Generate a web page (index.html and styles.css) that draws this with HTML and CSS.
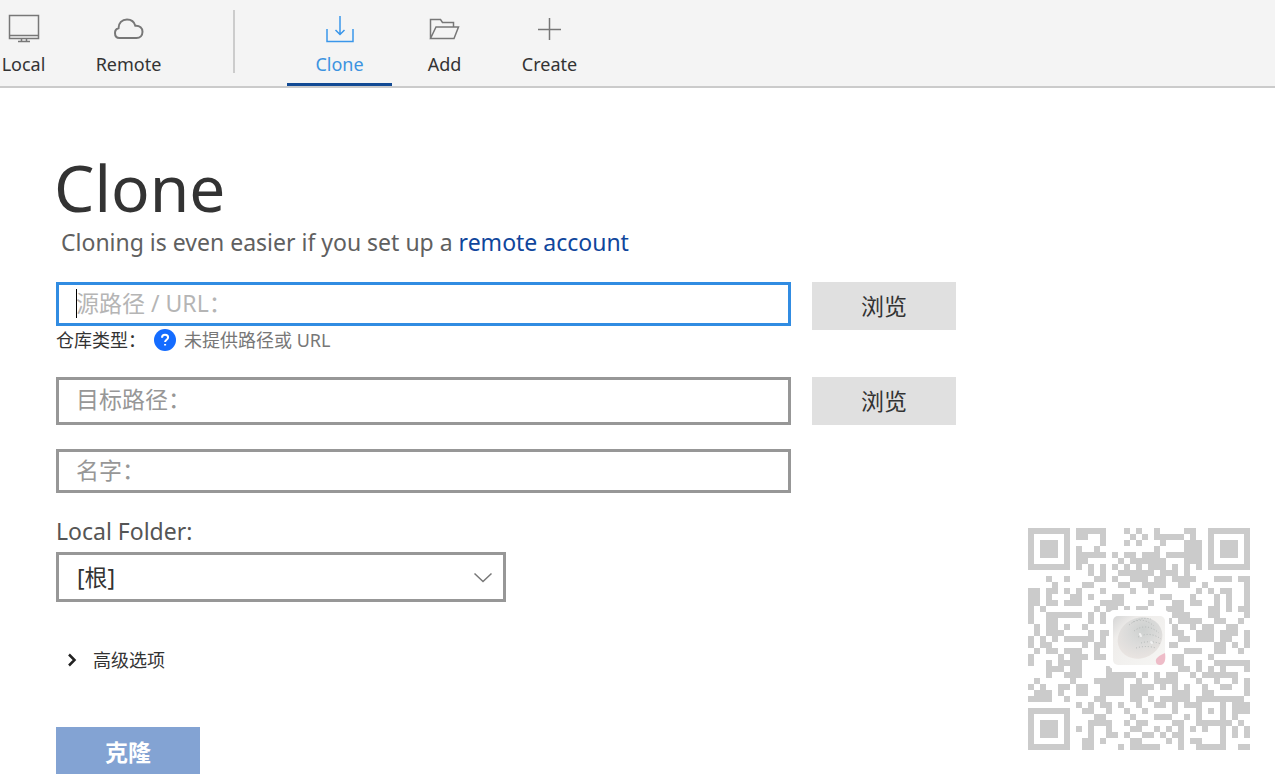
FILE: index.html
```html
<!DOCTYPE html>
<html lang="zh-CN">
<head>
<meta charset="utf-8">
<meta name="viewport" content="width=device-width, initial-scale=1">
<title>Clone</title>
<link rel="stylesheet" href="styles.css">
</head>
<body>
<header class="toolbar">
  <nav class="tabs">
    <button class="tab" type="button">
      <svg class="tab-icon" viewBox="0 0 32 32"><path d="M1.500 2.500h29v23h-29zM1.500 22.500h29M13.500 26v2.500M18.500 26v2.500M10 28.500h12"/></svg>
      <span>Local</span>
    </button>
    <button class="tab" type="button">
      <svg class="tab-icon cloud" viewBox="0 0 32 32"><path d="M6.500 25C3 25 2 22.500 2 20c0-2.500 1.300-4.300 3.500-4.800C5.500 10 9 6.500 14 6.500c4.300 0 7.300 2.500 8.300 6.300 4.500-.3 7.200 2.200 7.200 6 0 3.500-2.500 6.200-6 6.200z"/></svg>
      <span>Remote</span>
    </button>
    <span class="divider"></span>
    <button class="tab active" type="button" aria-current="page">
      <svg class="tab-icon" viewBox="0 0 32 32"><path d="M3 16v12.500h26V16M16 3v18.500M11.500 17l4.500 4.500 4.500-4.500"/></svg>
      <span>Clone</span>
    </button>
    <button class="tab" type="button">
      <svg class="tab-icon" viewBox="0 0 32 32"><path d="M1.500 25.500V6.500h10l2 3h11v4.500M1.500 25.500L7 14h22.500l-4.500 11.500z"/></svg>
      <span>Add</span>
    </button>
    <button class="tab" type="button">
      <svg class="tab-icon" viewBox="0 0 32 32"><path d="M15.500 5v22M4 16.500h23"/></svg>
      <span>Create</span>
    </button>
  </nav>
</header>

<main class="page">
  <h1 class="title">Clone</h1>
  <p class="subtitle">Cloning is even easier if you set up a <a href="#accounts">remote account</a></p>

  <form class="form">
    <div class="row">
      <div class="source">
        <div class="source-box">
          <input class="field focused" type="text" placeholder="源路径 / URL：" aria-label="源路径 / URL">
          <span class="caret"></span>
        </div>
        <div class="repo-type">
          <span>仓库类型：</span>
          <svg class="help" viewBox="0 0 22 22"><circle cx="11" cy="11" r="11"/><path d="M8 8.700C8 6.700 9.300 5.800 11 5.800s3.100 1 3.100 2.700c0 2.300-3 2.300-3 4.500M11.100 14.900v1.700"/></svg>
          <span class="status">未提供路径或 URL</span>
        </div>
      </div>
      <button class="browse" type="button">浏览</button>
    </div>
    <div class="row target">
      <input class="field tall" type="text" placeholder="目标路径：" aria-label="目标路径">
      <button class="browse" type="button">浏览</button>
    </div>
    <div class="row name">
      <input class="field" type="text" placeholder="名字：" aria-label="名字">
    </div>

    <label class="folder-label" for="folder">Local Folder:</label>
    <div class="select-box">
      <select class="select" id="folder"><option>[根]</option></select>
      <svg class="chevron" viewBox="0 0 20 12"><path d="M1.500 1.500L10 9.500l8.500-8"/></svg>
    </div>

    <button class="advanced" type="button" aria-expanded="false">
      <svg class="arrow" viewBox="0 0 12 14"><path d="M3 1.500L8.500 7 3 12.500"/></svg>
      <span>高级选项</span>
    </button>
    <button class="submit" type="submit">克隆</button>
  </form>
</main>

<aside class="qr">
  <svg class="qr-svg" viewBox="0 0 222 222" role="img" aria-label="QR">
    <defs>
      <linearGradient id="card" x1="0" y1="0" x2="1" y2="1"><stop offset="0" stop-color="#d6d6d6"/><stop offset=".25" stop-color="#efedeb"/><stop offset="1" stop-color="#f6f6f4"/></linearGradient>
      <radialGradient id="ball" cx=".65" cy=".35" r=".7"><stop offset="0" stop-color="#cdd0cf"/><stop offset=".5" stop-color="#dbdbda"/><stop offset="1" stop-color="#e9e4e1"/></radialGradient>
    </defs>
    <path id="modules" class="modules"/>
    <rect x="81" y="82" width="60" height="59" rx="5" fill="#fff"/>
    <rect x="85" y="88" width="52" height="49" rx="5" fill="url(#card)"/>
    <ellipse cx="112" cy="110" rx="23" ry="20" fill="url(#ball)" transform="rotate(-28 112 110)"/>
    <g fill="none" stroke="#b4b8b7" stroke-width="1" stroke-dasharray="1 2"><path d="M101 97q12-10 25 1M106 103q12-9 25 2M110 109q12-6 23 2M113 115q10-3 20 1M105 94q9-5 18-3M108 120q10-3 20 0"/></g>
    <path d="M112 106l1 2M123 114l1 1" stroke="#f2f2f2" stroke-width="2" stroke-linecap="round"/>
    <path d="M128 134c-1-4 3-6 9-9 1 6 0 12-5 12-2 0-4-1-4-3z" fill="#eebcc8"/>
  </svg>
</aside>
<script src="qr.js"></script>
</body>
</html>
```

FILE: styles.css
```css
* { box-sizing: border-box; }

body {
  margin: 0;
  min-height: 100vh;
  position: relative;
  background: #fff;
  color: #333;
  font-family: "Noto Sans", "Noto Sans CJK SC", sans-serif;
}

button, input, select { font: inherit; color: inherit; border-radius: 0; }
button { border: 0; padding: 0; background: none; cursor: pointer; }

.toolbar {
  height: 88px;
  background: #f4f4f4;
  border-bottom: 2px solid #cbcbcb;
  overflow: hidden;
}
.tabs { display: flex; height: 100%; margin-left: -29px; }
.tab {
  flex: none;
  width: 105px;
  display: flex;
  flex-direction: column;
  align-items: center;
  gap: 7px;
  padding-top: 13px;
  border-bottom: 3px solid transparent;
  font-size: 18px;
  line-height: 24px;
}
.tab-icon { width: 32px; height: 32px; fill: none; stroke: #777; stroke-width: 1.5; }
.cloud { stroke-width: 2; }
.active { color: #3c93e0; border-bottom-color: #124a94; }
.active .tab-icon { stroke: #3a96ea; }
.divider { flex: none; width: 2px; height: 63px; margin: 10px 52px 0; background: #ccc; }

.page { padding: 58px 24px 0 56px; }
.title { margin: 0 0 0 -2px; font-size: 64px; line-height: 84px; font-weight: 400; }
.subtitle { margin: 0; padding-left: 5px; font-size: 23px; line-height: 24px; color: #606060; }
.subtitle a { color: #10469c; text-decoration: none; }

.form { max-width: 900px; margin-top: 28px; }
.row {
  display: grid;
  grid-template-columns: minmax(0, 1fr) 144px;
  column-gap: 21px;
  align-items: start;
}
.target { margin-top: 24px; }
.name { margin-top: 24px; }
.field {
  display: block;
  width: 100%;
  height: 44px;
  padding: 0 17px 2px;
  border: 3px solid #979797;
  background: #fff;
  font-size: 23px;
  outline: none;
}
.field::placeholder { color: #979797; opacity: 1; }
.tall { height: 48px; padding-bottom: 5px; }
.focused { border-color: #318ce2; }
.focused::placeholder { color: #b5b5b5; }
.source-box { position: relative; }
.caret { position: absolute; left: 20px; top: 7px; width: 1px; height: 29px; background: #000; }
.repo-type {
  display: flex;
  align-items: center;
  height: 27px;
  font-size: 18px;
  line-height: 24px;
}
.help { width: 22px; height: 22px; margin: 0 8px; fill: #146cff; }
.help path { fill: none; stroke: #fff; stroke-width: 2; }
.status { color: #777; }
.browse { height: 48px; padding-bottom: 2px; background: #e0e0e0; font-size: 23px; }

.folder-label {
  display: block;
  margin-top: 23px;
  font-size: 23px;
  line-height: 30px;
  color: #555;
}
.select-box { position: relative; max-width: 450px; margin-top: 6px; }
.select {
  display: block;
  width: 100%;
  height: 50px;
  padding: 0 48px 0 18px;
  border: 3px solid #979797;
  background: #fff;
  font-size: 23px;
  appearance: none;
}
.chevron { position: absolute; right: 13px; top: 20px; width: 20px; height: 12px; fill: none; stroke: #777; stroke-width: 1.5; pointer-events: none; }

.advanced {
  display: flex;
  align-items: center;
  gap: 15px;
  margin-top: 46px;
  padding-left: 10px;
  font-size: 18px;
  line-height: 24px;
}
.arrow { width: 12px; height: 14px; fill: none; stroke: #222; stroke-width: 2.5; }
.submit {
  display: block;
  width: 144px;
  height: 47px;
  margin-top: 55px;
  background: #83a3d3;
  color: #fff;
  font-size: 23px;
  font-weight: 700;
}

.qr { position: absolute; right: 25px; bottom: 24px; width: 222px; height: 222px; }
.qr-svg { display: block; width: 100%; height: 100%; }
.modules { fill: #cbcbcb; shape-rendering: crispEdges; }
```

FILE: qr.js
```js
// Dark modules of each row, as column numbers and column ranges.
const rows = [
  "8-12 16 18 21 26-27",
  "8-9 12 17 19 21-25 27",
  "12 16 18 22 26-28",
  "8 11 21 26-28",
  "8-12 14 16-17 19-21 23-28",
  "8-9 15 17-22 26-28",
  "8 10 12 14 16 18 20-22 24 26 28",
  "10 12 15-20 22-24 26",
  "3 6 11-12 14 17-19 21-22 24-27 31-33 35-36",
  "4 9-10 15-16 19-22 25-26 29 36",
  "0-1 3-4 6 8 12 17 20 28 30 32-33 36",
  "0-1 3 7-8 10 14-15 22-23 27 31 33 36",
  "0-1 3-4 6-8 12-15 20 24-25 27-28 31 33 36",
  "0 2 11 13-14 16 18-19 23-25 30-31 33 35-36",
  "0 3-8 10 12 24-26 30-31 36",
  "0 3-4 10 12 23 25-28 31-32 35",
  "1 3-4 6 9 24 27 29-30 33-34",
  "1 3-5 12-13 10 24-25 28-30 32-34 36",
  "0 2 4 6-10 12 25-26 28-30 32-33 36",
  "0 2-3 9 11-12 23-24 31-32 34 36",
  "1 3-4 6-8 11 26-28 31-32 35",
  "0 5 7-9 11-12 24-25 30",
  "0 3 5-8 24-25 28 31-36",
  "3-5 7-8 13 25-26 28 30 32 36",
  "3 6-8 13-17 19 21 23-24 27 29-34",
  "1 7 11-15 18 21-24 28 31 34 36",
  "0 2 5-6 8-9 12-15 17-20 22 24 26 29 32-33 36",
  "1-3 5 8-9 12-15 17-19 24-26 29-30 36",
  "0-3 6 11-12 17-18 20 22-26 28-35",
  "8 10 12-13 15 18 21-22 24 26-28 32 34-36",
  "9-10 13 16 19 24 28 30 32 34-36",
  "11-12 17 21-23 26 28 32 34",
  "10-13 16 18-19 24-25 28-33 35",
  "8 10 13 17-18 21 23 25 27 29 32 34 36",
  "10 13-14 16 19-20 22 24-25 32 34 36",
  "9-10 12 17-18 23 25 27-28 32",
  "9-10 15 17-21 25 28-32 35-36"
];

const cell = 6;
const box = (x, y, w, h) => `M${x * cell} ${y * cell}h${w * cell}v${h * cell}h${-w * cell}z`;

let d = "";
rows.forEach((row, y) => {
  row.split(" ").forEach((run) => {
    const [from, to = from] = run.split("-").map(Number);
    d += box(from, y, to - from + 1, 1);
  });
});

// The three corner markers: a one-cell ring round a three-cell square.
[[0, 0], [30, 0], [0, 30]].forEach(([x, y]) => {
  d += box(x, y, 7, 1) + box(x, y + 6, 7, 1) + box(x, y + 1, 1, 5) + box(x + 6, y + 1, 1, 5) + box(x + 2, y + 2, 3, 3);
});

document.getElementById("modules").setAttribute("d", d);
```
